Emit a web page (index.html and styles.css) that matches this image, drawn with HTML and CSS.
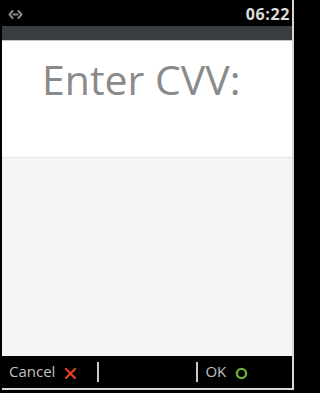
FILE: index.html
```html
<!DOCTYPE html>
<html>
<head>
<meta charset="utf-8">
<link rel="stylesheet" href="styles.css">
</head>
<body>
<div class="frame">
  <div class="screen">
    <div class="status">
      <svg class="conn" width="15" height="9" viewBox="0 0 15 9">
        <path d="M4.5 1 L1.5 4.5 L4.5 8 M10.5 1 L13.5 4.5 L10.5 8 M5.5 4.5 H9.5" fill="none" stroke="#8a8a8a" stroke-width="2" stroke-linecap="round" stroke-linejoin="round"/>
      </svg>
      <span class="time">06:22</span>
    </div>
    <div class="titlebar"></div>
    <div class="prompt">Enter CVV:</div>
    <div class="body"></div>
    <div class="softkeys">
      <span class="label">Cancel</span>
      <svg class="x" width="13" height="11" viewBox="0 0 13 11">
        <path d="M2 1 L11 10 M11 1 L2 10" fill="none" stroke="#e5421d" stroke-width="2.2" stroke-linecap="round"/>
      </svg>
      <span class="sep sep1"></span>
      <span class="sep sep2"></span>
      <span class="label ok">OK</span>
      <svg class="o" width="13" height="13" viewBox="0 0 13 13">
        <circle cx="6.5" cy="6.5" r="4.6" fill="none" stroke="#6aaf3a" stroke-width="2.4"/>
      </svg>
    </div>
  </div>
</div>
</body>
</html>
```

FILE: styles.css
```css
html, body {
  margin: 0;
  padding: 0;
  background: #000;
}
body {
  width: 297px;
  height: 393px;
  overflow: hidden;
}
.frame {
  box-sizing: border-box;
  width: 297px;
  height: 393px;
  padding: 0 3px 3px 2px;
  background: #000;
}
.screen {
  box-sizing: border-box;
  height: 390px;
  border-right: 2px solid #d6d6d6;
  border-bottom: 2px solid #d6d6d6;
  display: flex;
  flex-direction: column;
  font-family: "Open Sans", "DejaVu Sans", sans-serif;
}
.status {
  height: 26px;
  flex: none;
  background: #000;
  display: flex;
  align-items: center;
  justify-content: space-between;
  padding: 0 2px 0 6px;
}
.conn {
  display: block;
  margin-top: 3px;
}
.time {
  color: #dcdcdc;
  font-weight: 700;
  font-size: 16px;
  letter-spacing: 0.6px;
  line-height: 20px;
  margin-top: 2px;
}
.titlebar {
  height: 14px;
  flex: none;
  background: #3b3e41;
  border-bottom: 1px solid #c4c4c4;
}
.prompt {
  height: 116px;
  flex: none;
  box-sizing: border-box;
  background: #fff;
  color: #8a8a8a;
  font-size: 41px;
  padding: 10px 0 0 40px;
  white-space: nowrap;
}
.body {
  flex: 1;
  background: #f5f5f5;
  border-top: 1px solid #e6e6e6;
}
.softkeys {
  height: 32px;
  flex: none;
  background: #000;
  display: flex;
  align-items: center;
  padding-left: 7px;
}
.label {
  color: #c0c0c0;
  font-size: 15px;
  line-height: 19px;
  margin-top: -1px;
}
.x {
  display: block;
  margin-left: 9px;
  margin-top: 2px;
}
.sep {
  display: block;
  width: 2px;
  height: 20px;
  background: #c8c8c8;
}
.sep1 {
  margin-left: 20px;
}
.sep2 {
  margin-left: 97px;
}
.ok {
  margin-left: 7px;
}
.o {
  display: block;
  margin-left: 9px;
  margin-top: 2px;
}
```
